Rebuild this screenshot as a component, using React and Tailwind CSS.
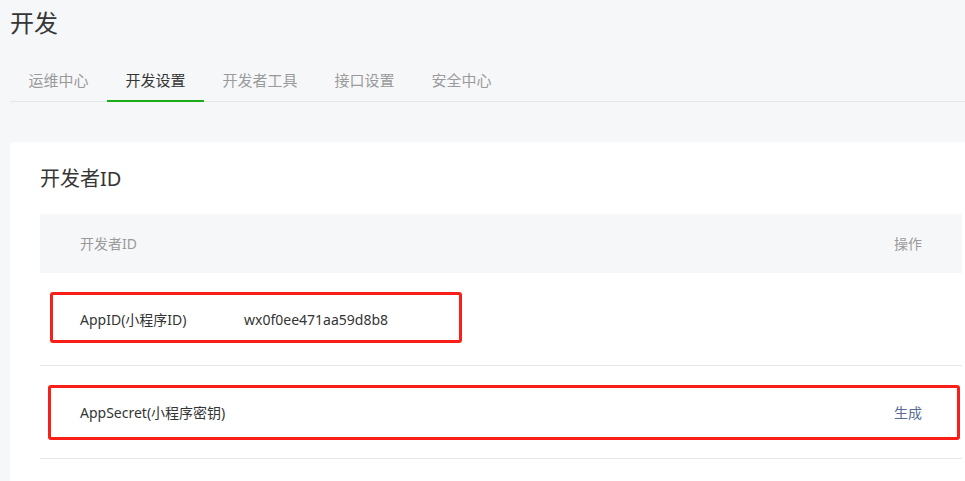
import React from 'react';

const tabs = ['运维中心', '开发设置', '开发者工具', '接口设置', '安全中心'];

export default function App() {
  return (
    <div
      className="w-[965px] h-[481px] overflow-hidden bg-[#f6f7f9] text-[#353535]"
      style={{ fontFamily: '"Noto Sans", "Noto Sans CJK SC", sans-serif' }}
    >
      {/* page title */}
      <h1 className="pl-[10px] pt-[7px] text-[24px] leading-[32px] font-normal">开发</h1>

      {/* tabs */}
      <div className="ml-[10px] mt-[31px] flex border-b border-[#e7e7eb]">
        {tabs.map((t, i) => (
          <div
            key={t}
            className={
              i === 1
                ? '-mb-px px-[18.5px] pb-[10px] text-[15px] leading-[20px] border-b-2 border-[#1aad19] text-[#353535]'
                : '-mb-px px-[18.5px] pb-[10px] text-[15px] leading-[20px] border-b-2 border-transparent text-[#9a9a9a]'
            }
          >
            {t}
          </div>
        ))}
      </div>

      {/* card */}
      <div className="ml-[10px] mt-[40px] bg-white rounded-tl-[4px] pl-[30px] pr-[3px] pt-[23px] h-[400px]">
        <h2 className="text-[20px] leading-[28px] font-normal mb-[21px]">开发者ID</h2>

        <div className="w-[922px] text-[14px]">
          <div className="h-[59px] bg-[#f6f7f9] flex items-center justify-between pl-[40px] pr-[40px] text-[#9a9a9a]">
            <span>开发者ID</span>
            <span>操作</span>
          </div>

          <div className="relative h-[93px] border-b border-[#e7e7eb] flex items-center pl-[40px] pr-[40px]">
            <span className="w-[164px]">AppID(小程序ID)</span>
            <span>wx0f0ee471aa59d8b8</span>
            <div className="absolute left-[10px] top-[19px] w-[412px] h-[51px] border-[3px] border-[#fa1e19] rounded-[3px]" />
          </div>

          <div className="relative h-[93px] border-b border-[#e7e7eb] flex items-center justify-between pl-[40px] pr-[40px]">
            <span>AppSecret(小程序密钥)</span>
            <a className="text-[#576b95] cursor-pointer">生成</a>
            <div className="absolute left-[8px] top-[19px] w-[912px] h-[55px] border-[3px] border-[#fa1e19] rounded-[3px]" />
          </div>
        </div>
      </div>
    </div>
  );
}
